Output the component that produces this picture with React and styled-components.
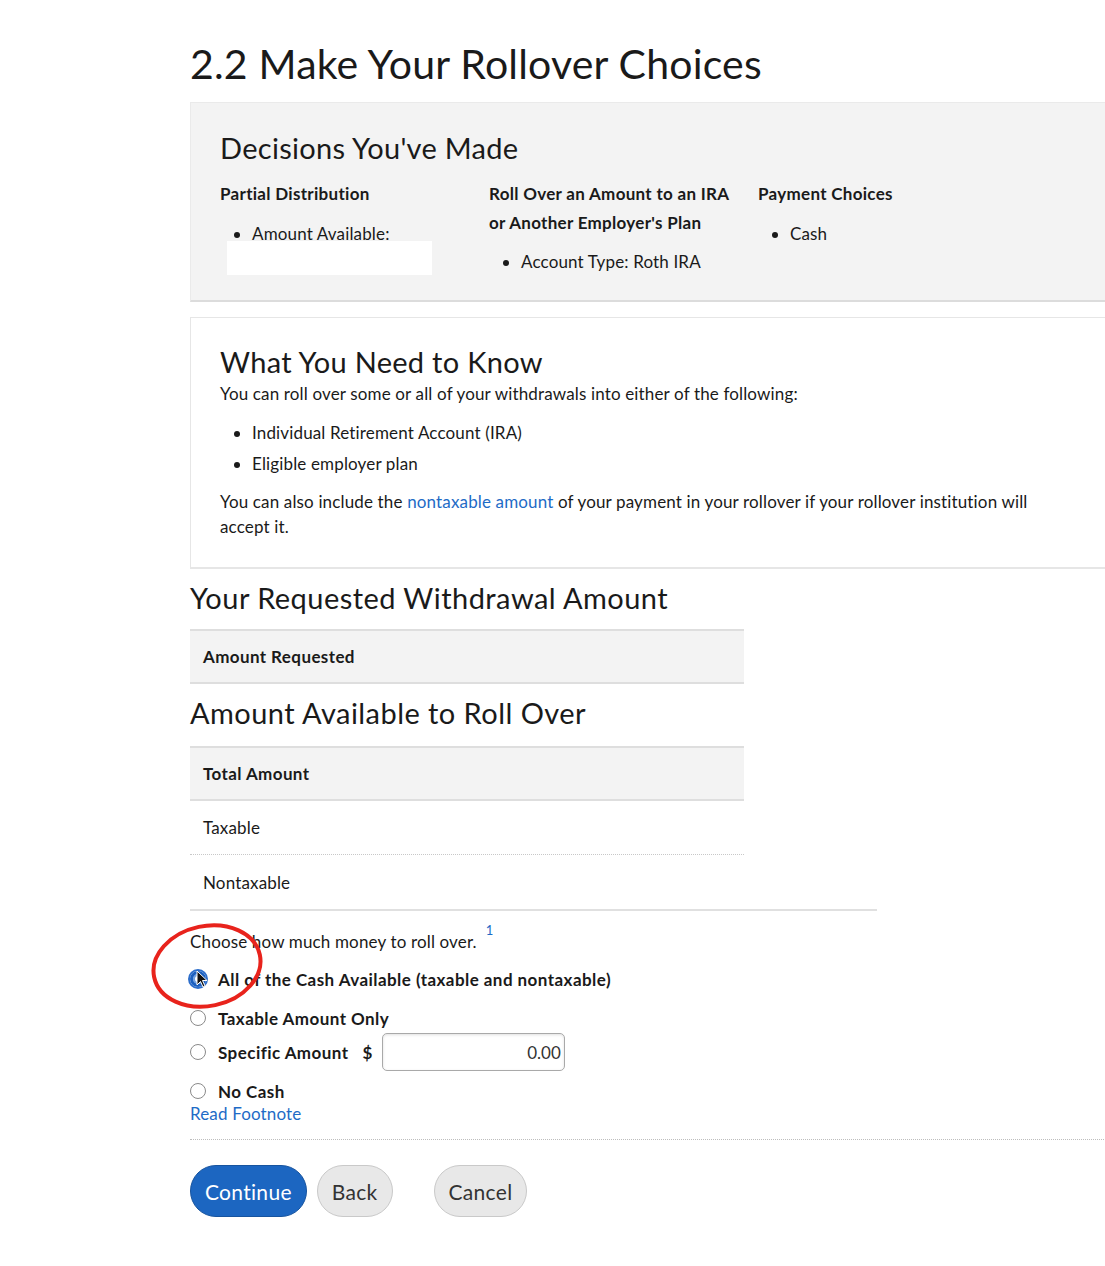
import React from 'react';
import styled, { createGlobalStyle, css } from 'styled-components';

const GlobalStyle = createGlobalStyle`
  html, body {
    margin: 0;
    padding: 0;
    background: #fff;
    overflow-x: hidden;
  }
  body {
    font-family: Lato, "Noto Sans", Arial, sans-serif;
    font-size: 17px;
    letter-spacing: 0.15px;
    color: #1a1a1a;
  }
`;

const Page = styled.div`
  width: 940px;
  margin-left: 190px;
  padding-top: 40px;
  padding-bottom: 46px;
`;

const PageTitle = styled.h1`
  margin: 0 0 14px;
  font-size: 41px;
  font-weight: 400;
  line-height: 48px;
  letter-spacing: 0.2px;
`;

const Panel = styled.section`
  box-sizing: border-box;
  padding: 25px 29px 28px;
  border: 1px solid #e6e6e6;
  border-bottom-width: 2px;
  ${(p) =>
    p.gray &&
    css`
      padding-top: 26px;
      padding-bottom: 25px;
      background: #f3f3f3;
      border-color: #eaeaea;
      border-bottom-color: #dcdcdc;
    `}
  ${(p) =>
    p.spaced &&
    css`
      margin-top: 15px;
    `}
`;

const PanelTitle = styled.h2`
  margin: 0 0 ${(p) => p.gap || 0}px;
  font-size: 29px;
  font-weight: 400;
  line-height: 38px;
  letter-spacing: 0.3px;
`;

const Columns = styled.div`
  display: grid;
  grid-template-columns: 269px 269px 269px;
`;

const ColHead = styled.div`
  font-size: 17px;
  font-weight: 700;
  line-height: 29px;
  letter-spacing: 0.3px;
`;

const Bullets = styled.ul`
  margin: ${(p) => p.top || 0}px 0 0;
  padding-left: 32px;
  line-height: ${(p) => p.lh || 28}px;
`;

const Redacted = styled.div`
  width: 205px;
  height: 34px;
  margin: -4px 0 0 7px;
  background: #fff;
`;

const Para = styled.p`
  max-width: 840px;
  margin: ${(p) => p.top || 0}px 0 0;
  line-height: 25px;
`;

const Link = styled.a`
  color: #1e6bc6;
  text-decoration: none;
  cursor: pointer;
`;

const SectionTitle = styled.h2`
  margin: 11px 0 ${(p) => p.bottom || 13}px;
  font-size: 29px;
  font-weight: 400;
  line-height: 36px;
  letter-spacing: 0.45px;
`;

const Table = styled.div`
  width: 554px;
`;

const Row = styled.div`
  box-sizing: border-box;
  height: 54px;
  display: flex;
  align-items: center;
  padding-left: 13px;
  ${(p) =>
    p.head &&
    css`
      height: 55px;
      background: #f3f3f3;
      font-weight: 700;
      letter-spacing: 0.4px;
      border-top: 2px solid #dedede;
      border-bottom: 2px solid #dedede;
    `}
  ${(p) =>
    p.dotted &&
    css`
      border-bottom: 1px dotted #c8c8c8;
    `}
`;

const WideRule = styled.div`
  width: 687px;
  border-top: 2px solid #e0e0e0;
`;

const Question = styled.div`
  margin-top: 20px;
  line-height: 22px;
`;

const Sup = styled.span`
  position: relative;
  top: -13px;
  margin-left: 9px;
  color: #1e6bc6;
  font-size: 13px;
`;

const Options = styled.div`
  display: flex;
  flex-direction: column;
  margin-top: 8px;
`;

const Option = styled.label`
  display: flex;
  align-items: center;
  gap: 12px;
  height: 34px;
  margin-top: ${(p) => p.top || 0}px;
  font-weight: 700;
  letter-spacing: 0.45px;
  cursor: pointer;
`;

const RadioWrap = styled.span`
  position: relative;
  display: flex;
  flex-shrink: 0;
`;

const Radio = styled.span`
  box-sizing: border-box;
  width: 16px;
  height: 16px;
  border-radius: 50%;
  border: 1px solid #8a8a8a;
  background: #fff;
  ${(p) =>
    p.checked &&
    css`
      border: 3px solid #1a5fbf;
      box-shadow: inset 0 0 0 2px #6fa1e2, inset 0 0 0 4px #fff;
      outline: 2px solid #2d6ecb;
    `}
`;

const Dollar = styled.span`
  margin-left: 2px;
`;

const AmountInput = styled.input`
  box-sizing: border-box;
  width: 183px;
  height: 38px;
  flex-shrink: 0;
  margin-left: -3px;
  border: 1px solid #a9a9a9;
  border-radius: 5px;
  padding: 0 3px 0 8px;
  text-align: right;
  font-family: inherit;
  font-size: 17px;
  color: #333;
  box-shadow: inset 0 1px 3px rgba(0, 0, 0, 0.12);
`;

const Footnote = styled(Link)`
  display: block;
  line-height: 20px;
  margin-top: -4px;
`;

const DottedRule = styled.div`
  margin-top: 15px;
  border-top: 1px dotted #bdbdbd;
`;

const Buttons = styled.div`
  display: flex;
  gap: 10px;
  margin-top: 25px;
`;

const Button = styled.button`
  box-sizing: border-box;
  height: 52px;
  padding: 0 14px;
  border-radius: 26px;
  font-family: inherit;
  font-size: 21px;
  letter-spacing: 0.3px;
  cursor: pointer;
  background: #e8e8e8;
  color: #333;
  border: 1px solid #c9c9c9;
  ${(p) =>
    p.primary &&
    css`
      background: #1c66c1;
      color: #fff;
      border-color: #17549f;
    `}
  ${(p) =>
    p.away &&
    css`
      margin-left: 31px;
    `}
`;

const Annotation = styled.svg`
  position: absolute;
  left: -48px;
  top: -55px;
  pointer-events: none;
`;

export default function App() {
  return (
    <>
      <GlobalStyle />
      <Page>
        <PageTitle>2.2 Make Your Rollover Choices</PageTitle>

        <Panel gray>
          <PanelTitle gap={12}>Decisions You've Made</PanelTitle>
          <Columns>
            <div>
              <ColHead>Partial Distribution</ColHead>
              <Bullets top={15} lh={22}>
                <li>Amount Available:</li>
              </Bullets>
              <Redacted />
            </div>
            <div>
              <ColHead>
                Roll Over an Amount to an IRA
                <br />
                or Another Employer's Plan
              </ColHead>
              <Bullets top={14} lh={22}>
                <li>Account Type: Roth IRA</li>
              </Bullets>
            </div>
            <div>
              <ColHead>Payment Choices</ColHead>
              <Bullets top={15} lh={22}>
                <li>Cash</li>
              </Bullets>
            </div>
          </Columns>
        </Panel>

        <Panel spaced>
          <PanelTitle>What You Need to Know</PanelTitle>
          <Para>You can roll over some or all of your withdrawals into either of the following:</Para>
          <Bullets top={11} lh={31}>
            <li>Individual Retirement Account (IRA)</li>
            <li>Eligible employer plan</li>
          </Bullets>
          <Para top={10}>
            You can also include the <Link>nontaxable amount</Link> of your payment in your rollover if your
            rollover institution will accept it.
          </Para>
        </Panel>

        <SectionTitle>Your Requested Withdrawal Amount</SectionTitle>
        <Table>
          <Row head>Amount Requested</Row>
        </Table>

        <SectionTitle bottom={15}>Amount Available to Roll Over</SectionTitle>
        <Table>
          <Row head>Total Amount</Row>
          <Row dotted>Taxable</Row>
          <Row>Nontaxable</Row>
        </Table>
        <WideRule />

        <Question>
          Choose how much money to roll over.<Sup>1</Sup>
        </Question>

        <Options>
          <Option>
            <RadioWrap>
              <Radio checked />
              <Annotation width="130" height="100" viewBox="0 0 130 100">
                <ellipse
                  cx="65"
                  cy="50"
                  rx="54"
                  ry="40"
                  transform="rotate(-12 65 50)"
                  fill="none"
                  stroke="#e8231c"
                  strokeWidth="4"
                />
                <path
                  d="M55 55 L55 69 L58.5 65.5 L61 71 L63 70 L60.5 64.5 L65 64.5 Z"
                  fill="#111"
                  stroke="#fff"
                  strokeWidth="1"
                />
              </Annotation>
            </RadioWrap>
            All of the Cash Available (taxable and nontaxable)
          </Option>
          <Option top={5}>
            <RadioWrap>
              <Radio />
            </RadioWrap>
            Taxable Amount Only
          </Option>
          <Option>
            <RadioWrap>
              <Radio />
            </RadioWrap>
            Specific Amount
            <Dollar>$</Dollar>
            <AmountInput defaultValue="0.00" />
          </Option>
          <Option top={5}>
            <RadioWrap>
              <Radio />
            </RadioWrap>
            No Cash
          </Option>
        </Options>
        <Footnote>Read Footnote</Footnote>
        <DottedRule />

        <Buttons>
          <Button primary>Continue</Button>
          <Button>Back</Button>
          <Button away>Cancel</Button>
        </Buttons>
      </Page>
    </>
  );
}
